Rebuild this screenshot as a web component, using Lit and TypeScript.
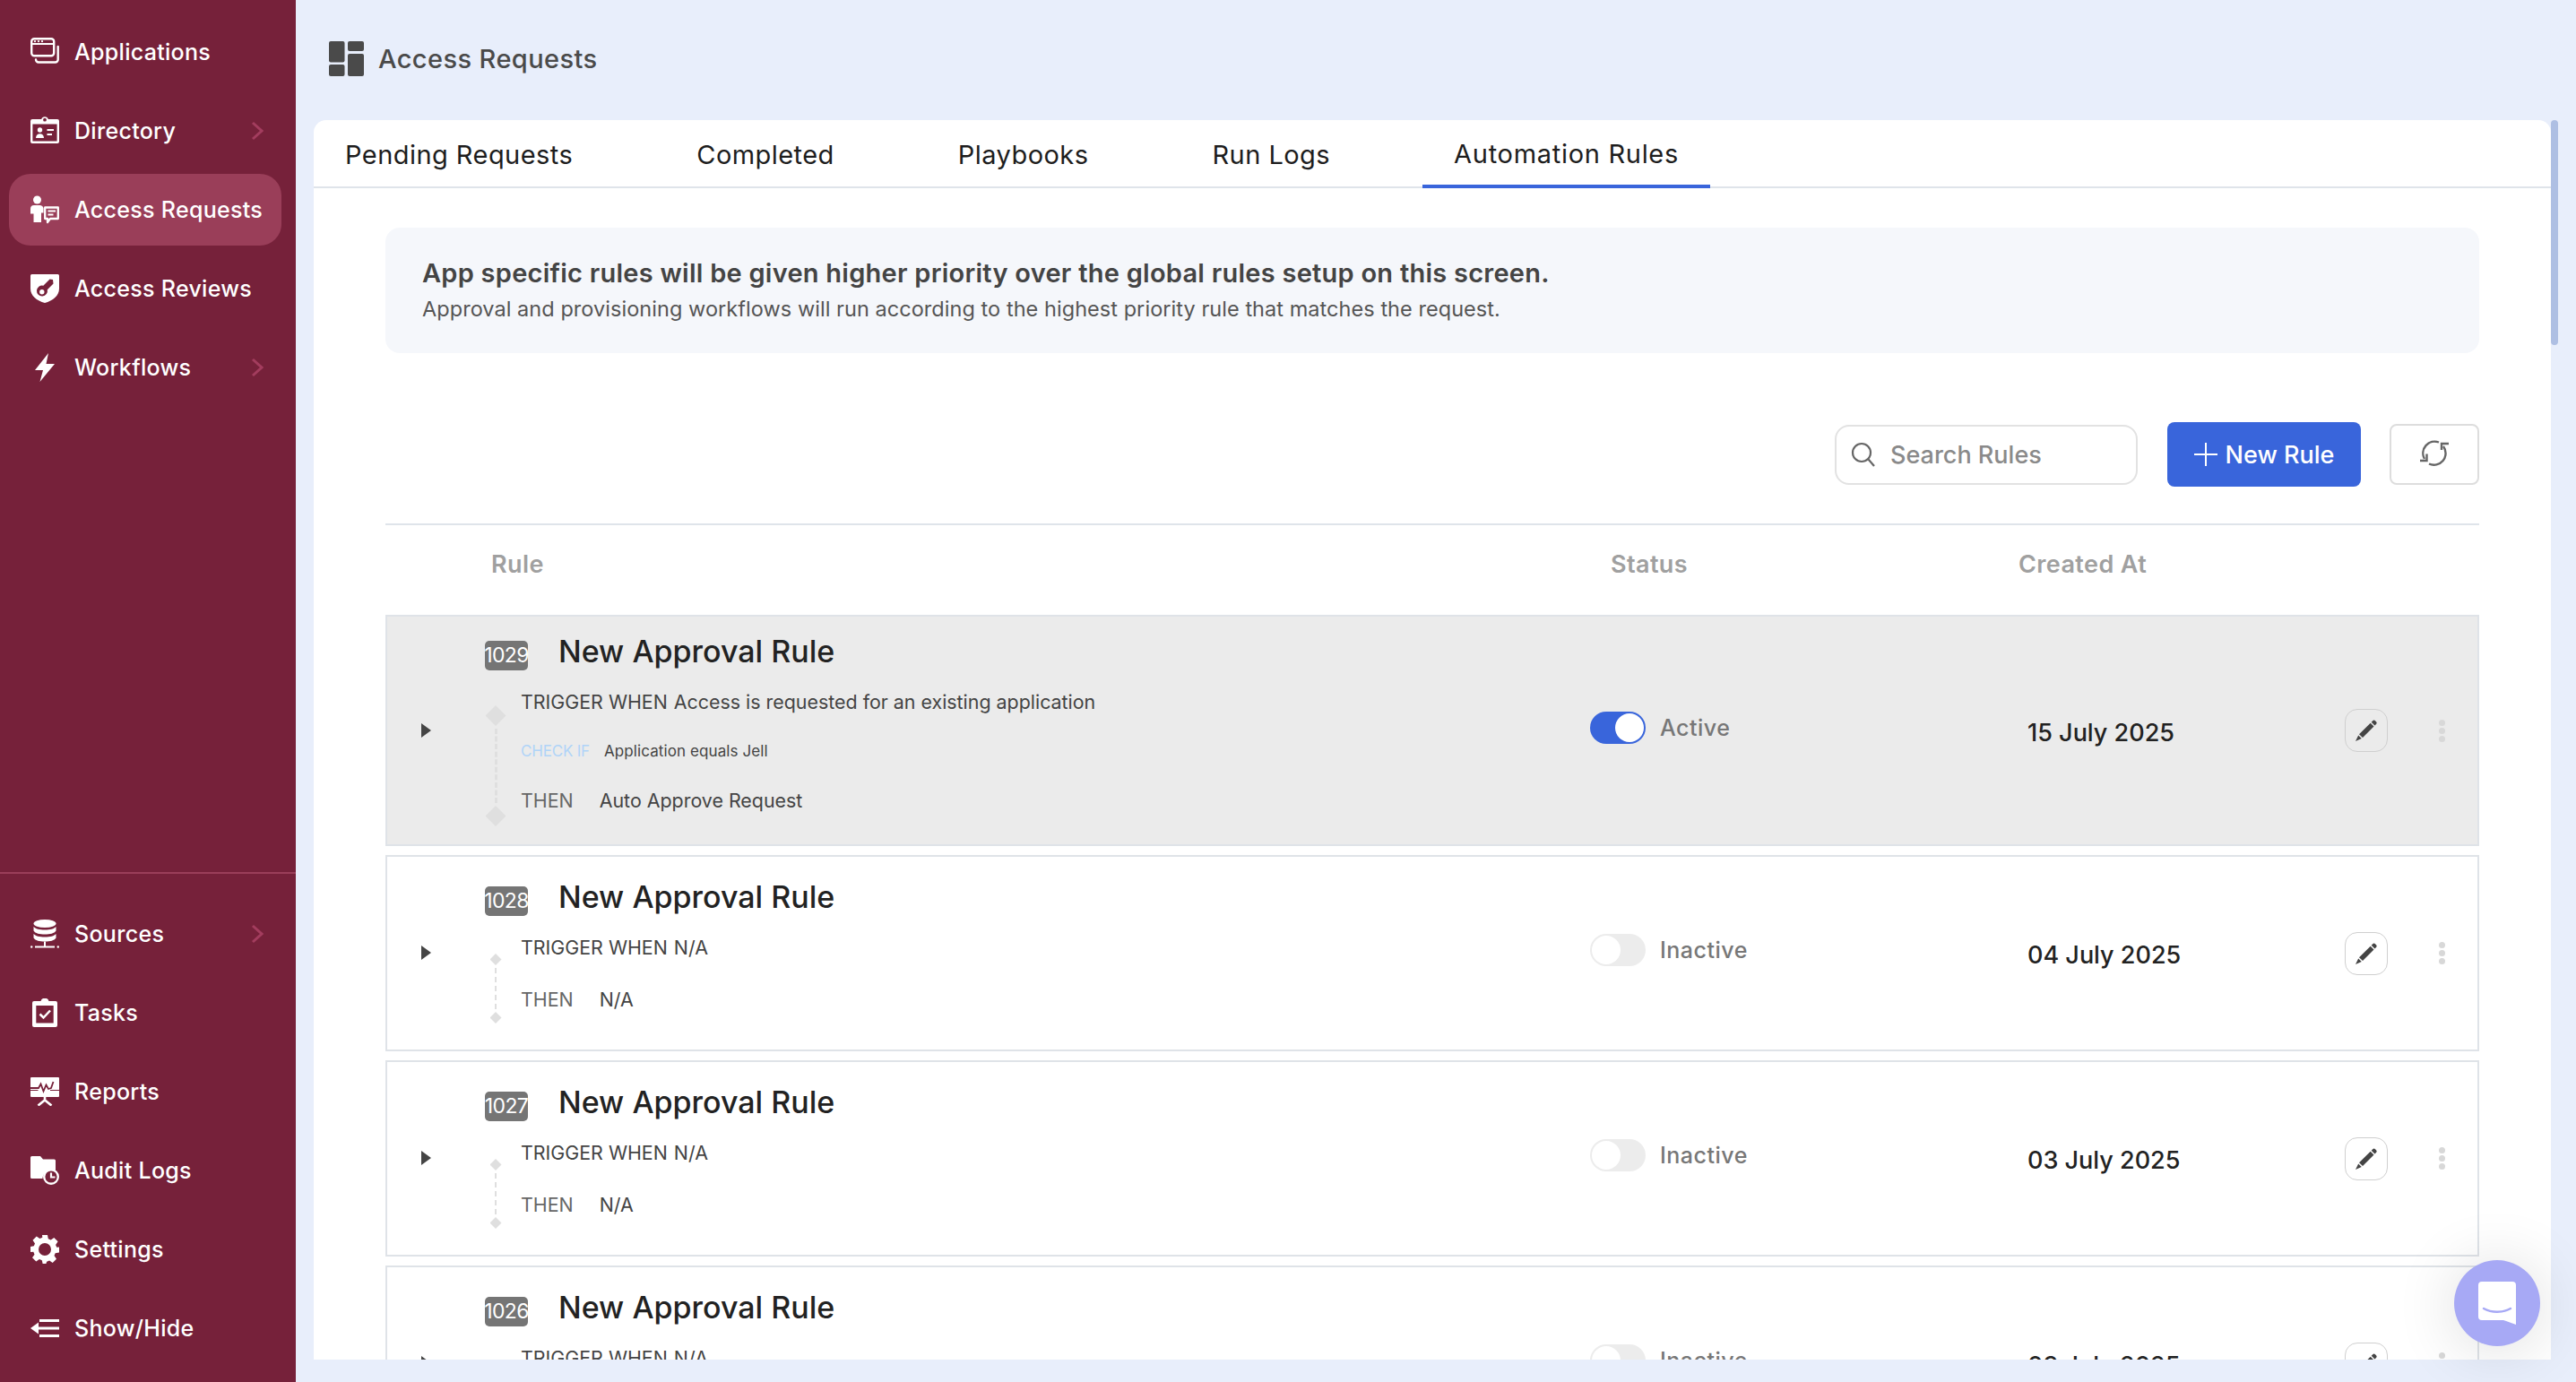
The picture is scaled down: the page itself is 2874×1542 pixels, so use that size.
import { LitElement, css, html, svg } from "lit";
import { customElement } from "lit/decorators.js";
import { classMap } from "lit/directives/class-map.js";

type NavItem = { label: string; icon: string; chevron?: boolean; active?: boolean };
type Line = { label: string; value: string; small?: boolean };
type Rule = { id: number; active: boolean; date: string; big?: boolean; lines: Line[] };

const topNav: NavItem[] = [
  { label: "Applications", icon: "apps" },
  { label: "Directory", icon: "directory", chevron: true },
  { label: "Access Requests", icon: "requests", active: true },
  { label: "Access Reviews", icon: "reviews" },
  { label: "Workflows", icon: "bolt", chevron: true },
];

const bottomNav: NavItem[] = [
  { label: "Sources", icon: "sources", chevron: true },
  { label: "Tasks", icon: "tasks" },
  { label: "Reports", icon: "reports" },
  { label: "Audit Logs", icon: "audit" },
  { label: "Settings", icon: "gear" },
  { label: "Show/Hide", icon: "hide" },
];

const tabs = ["Pending Requests", "Completed", "Playbooks", "Run Logs", "Automation Rules"];

const naLines: Line[] = [
  { label: "TRIGGER WHEN", value: "N/A" },
  { label: "THEN", value: "N/A" },
];

const rules: Rule[] = [
  {
    id: 1029,
    active: true,
    big: true,
    date: "15 July 2025",
    lines: [
      { label: "TRIGGER WHEN", value: "Access is requested for an existing application" },
      { label: "CHECK IF", value: "Application equals Jell", small: true },
      { label: "THEN", value: "Auto Approve Request" },
    ],
  },
  { id: 1028, active: false, date: "04 July 2025", lines: naLines },
  { id: 1027, active: false, date: "03 July 2025", lines: naLines },
  { id: 1026, active: false, date: "03 July 2025", lines: naLines },
];

const icons: Record<string, unknown> = {
  apps: svg`<rect x="1.2" y="1.2" width="25" height="19" rx="3" fill="none" stroke="currentColor" stroke-width="2.4"/>
    <path d="M1.5 7h24.5" stroke="currentColor" stroke-width="2"/>
    <circle cx="5" cy="4.2" r="1.1" fill="currentColor"/><circle cx="9" cy="4.2" r="1.1" fill="currentColor"/><circle cx="13" cy="4.2" r="1.1" fill="currentColor"/>
    <path d="M30.7 10v14.5a3 3 0 0 1-3 3H9a3 3 0 0 1-3-3" fill="none" stroke="currentColor" stroke-width="2.4" stroke-linecap="round"/>`,
  directory: svg`<path fill-rule="evenodd" fill="currentColor" d="M2 3h10.2a4 4 0 0 1 7.6 0H30a2 2 0 0 1 2 2v23a2 2 0 0 1-2 2H2a2 2 0 0 1-2-2V5a2 2 0 0 1 2-2zm14-1.200a1.900 1.900 0 1 0 0 3.800 1.900 1.900 0 0 0 0-3.800zM2.400 8.500V27.600h27.200V8.500z"/>
    <circle cx="10.500" cy="15" r="2.700" fill="currentColor"/><path d="M6 24c0-3.200 2-4.800 4.500-4.800S15 20.800 15 24z" fill="currentColor"/>
    <path d="M18.500 15H26M18.500 20H24" stroke="currentColor" stroke-width="2.200"/>`,
  requests: svg`<circle cx="7.500" cy="5" r="4.500" fill="currentColor"/>
    <path d="M4 11h7a4 4 0 0 1 3.500 3v5.500H12V30H3.500V20.500H0V15a4 4 0 0 1 4-4z" fill="currentColor"/>
    <path d="M16.200 13.500H30.800V26H22l-3 4v-4h-2.800z" fill="none" stroke="currentColor" stroke-width="2.300" stroke-linejoin="round"/>
    <path d="M19.500 17.500H28M19.500 21.500H25.500" stroke="currentColor" stroke-width="2"/>`,
  reviews: svg`<path fill-rule="evenodd" fill="currentColor" d="M1.500 0H30.500a1.500 1.500 0 0 1 1.500 1.500V16c0 8-7 13.500-16 16C7 29.500 0 24 0 16V1.500A1.500 1.500 0 0 1 1.500 0zM25 6l-3.500-.5-7.200 7.200a6 6 0 1 0 4.500 4.500l6.700-6.700zM12.800 17a2.700 2.700 0 1 1 0 5.400 2.700 2.700 0 0 1 0-5.400z"/>`,
  bolt: svg`<path fill="currentColor" d="M20 0 5 19h9l-3.500 13L27 12h-9.500z"/>`,
  sources: svg`<ellipse cx="16" cy="4.500" rx="12.500" ry="4.500" fill="currentColor"/>
    <path d="M3.500 8c2 2.400 6.500 3.500 12.500 3.500S26.500 10.400 28.500 8v4.500c-2 3-6.500 4-12.500 4s-10.500-1-12.500-4zM3.500 16c2 2.400 6.500 3.500 12.500 3.500s10.500-1.100 12.500-3.500v4.500c-2 3-6.500 4-12.500 4s-10.500-1-12.500-4z" fill="currentColor"/>
    <path d="M16 24.500V30M5 30.500H27" stroke="currentColor" stroke-width="2"/>
    <circle cx="1.200" cy="30.500" r="1.200" fill="currentColor"/><circle cx="30.800" cy="30.500" r="1.200" fill="currentColor"/>`,
  tasks: svg`<path fill="currentColor" fill-rule="evenodd" d="M4 3h7.500a4.700 4.700 0 0 1 9 0H28a2 2 0 0 1 2 2v25a2 2 0 0 1-2 2H4a2 2 0 0 1-2-2V5a2 2 0 0 1 2-2zm2.300 5v19.500h19.400V8z"/>
    <path d="M10.500 17.500l4 4 7.500-8" fill="none" stroke="currentColor" stroke-width="2.500"/>`,
  reports: svg`<path fill="currentColor" d="M1 0h30a1 1 0 0 1 1 1v20a1 1 0 0 1-1 1H1a1 1 0 0 1-1-1V1a1 1 0 0 1 1-1z"/>
    <path d="M0 12H9l2.500-4.500 3 8 3-7 2.500 4.500 3-1 2.500-7" fill="none" stroke="#76213a" stroke-width="1.800"/>
    <path d="M0 14.500h8.500M22 14.500h10" stroke="#76213a" stroke-width="1.200"/>
    <path d="M16 22v3M8.500 31.500 16 25.500l7.500 6" fill="none" stroke="currentColor" stroke-width="2.600"/>`,
  audit: svg`<path fill="currentColor" d="M1.500 0H11l3 3.500h12.500A1.500 1.500 0 0 1 28 5v11a10.500 10.500 0 0 0-14.500 9H1.500A1.500 1.500 0 0 1 0 23.500v-22A1.500 1.500 0 0 1 1.500 0z"/>
    <circle cx="23" cy="23" r="7.800" fill="none" stroke="currentColor" stroke-width="2.400"/>
    <path d="M23 18.500V23.500H27.500" fill="none" stroke="currentColor" stroke-width="2.200"/>`,
  gear: svg`<path fill="currentColor" fill-rule="evenodd" d="M13 0h6l.8 4.300 2.900 1.200 3.600-2.500 4.300 4.300-2.500 3.600 1.200 2.900L32 13.600v5.800l-4.300.8-1.200 2.900 2.500 3.600-4.300 4.300-3.600-2.500-2.900 1.200L17.400 32h-3.800l-.8-3.700-2.900-1.200-3.600 2.500-4.300-4.300 2.500-3.600-1.200-2.900L0 18.900v-5.800l3.800-.8L5 9.400 2.500 5.800 6.800 1.500l3.600 2.500 2.900-1.200zM16 9a7 7 0 1 0 0 14 7 7 0 0 0 0-14z"/>`,
  hide: svg`<path fill="currentColor" d="M0 16 9 9.500v13z"/>
    <path d="M10 7.500H32M8 16H32M10 24.500H32" stroke="currentColor" stroke-width="3"/>`,
};

const pencil = svg`<path fill="currentColor" d="M19.200 1.300a2 2 0 0 1 2.800 0l1 .9a2 2 0 0 1 0 2.800l-1.500 1.500-3.800-3.700zM16.700 3.800l3.800 3.700L8 20 4 16.300zM3.200 17.400 6.800 21 0 24z"/>`;

@customElement("app-root")
export class AppRoot extends LitElement {
  static styles = css`
    :host {
      display: flex;
      width: 100vw;
      height: 100vh;
      overflow: hidden;
      position: relative;
      background: #e8eefb;
      font-family: Inter, "Noto Sans", sans-serif;
      color: #222;
    }
    .sidebar {
      width: 330px;
      flex: none;
      background: #76213a;
      color: #fff;
      display: flex;
      flex-direction: column;
      justify-content: space-between;
    }
    .nav-top {
      padding: 18px 0 0;
    }
    .nav-bottom {
      border-top: 2px solid #9a3e59;
      padding: 27px 0 20px;
    }
    .nav-item {
      height: 80px;
      margin: 0 16px 8px 10px;
      padding: 0 20px 0 24px;
      border-radius: 24px;
      display: flex;
      align-items: center;
      font-size: 25px;
      font-weight: 500;
      letter-spacing: 0.3px;
    }
    .nav-bottom .nav-item:last-child {
      margin-bottom: 0;
    }
    .nav-item.active {
      background: #9a3e59;
    }
    .nav-item .icon {
      width: 32px;
      height: 32px;
      flex: none;
      margin-right: 17px;
    }
    .nav-item .chev {
      width: 14px;
      height: 22px;
      margin-left: auto;
      color: #a33d5e;
    }
    .main {
      flex: 1;
      min-width: 0;
      display: flex;
      flex-direction: column;
      padding: 0 28px 25px 20px;
    }
    .page-head {
      height: 134px;
      box-sizing: border-box;
      flex: none;
      display: flex;
      align-items: center;
      padding: 0 0 4px 17px;
      gap: 16px;
      color: #4a4a4a;
      font-size: 29px;
      font-weight: 500;
      letter-spacing: 0.4px;
    }
    .page-head svg {
      width: 39px;
      height: 39px;
    }
    .panel-wrap {
      flex: 1;
      min-height: 0;
      position: relative;
    }
    .panel {
      height: 100%;
      background: #fff;
      border-radius: 14px 14px 0 0;
      overflow: hidden;
    }
    .scrollbar {
      position: absolute;
      top: 0;
      right: -8px;
      width: 8px;
      height: 251px;
      border-radius: 4px;
      background: #aebfe3;
    }
    .tabs {
      display: flex;
      gap: 68px;
      height: 74px;
      border-bottom: 2px solid #dfe4ea;
    }
    .tab {
      padding: 0 35px;
      height: 76px;
      box-sizing: border-box;
      display: flex;
      align-items: center;
      font-size: 29px;
      font-weight: 400;
      letter-spacing: 0.45px;
      color: #1d1d1d;
    }
    .tab.active {
      border-bottom: 4px solid #3965db;
      padding-top: 2px;
      letter-spacing: 0.7px;
    }
    .content {
      padding: 44px 80px 0;
    }
    .info {
      height: 140px;
      box-sizing: border-box;
      background: #f5f7fb;
      border-radius: 16px;
      padding: 32px 41px 0;
    }
    .info-title {
      font-size: 29px;
      font-weight: 600;
      line-height: 38px;
      letter-spacing: 0.25px;
      color: #444;
    }
    .info-sub {
      font-size: 23.5px;
      line-height: 32px;
      margin-top: 5px;
      letter-spacing: 0.05px;
      color: #555;
    }
    .toolbar {
      display: flex;
      align-items: center;
      justify-content: flex-end;
      margin-top: 77px;
      height: 72px;
    }
    .search {
      width: 338px;
      height: 67px;
      box-sizing: border-box;
      border: 2px solid #e2e2e2;
      border-radius: 16px;
      display: flex;
      align-items: center;
      padding: 0 0 0 16px;
      gap: 16px;
    }
    .search svg {
      width: 28px;
      height: 28px;
      flex: none;
      color: #666;
    }
    .search input {
      width: 250px;
      border: 0;
      outline: 0;
      background: transparent;
      padding: 0;
      font: 500 27px Inter, sans-serif;
    }
    .search input::placeholder {
      color: #8a8a8a;
    }
    .new-rule {
      margin-left: 33px;
      width: 216px;
      height: 72px;
      border: 0;
      border-radius: 8px;
      background: #3965db;
      color: #fff;
      font: 500 27px Inter, sans-serif;
      display: flex;
      align-items: center;
      justify-content: center;
      gap: 9px;
      padding: 0;
    }
    .new-rule svg {
      width: 26px;
      height: 26px;
    }
    .refresh {
      margin-left: 32px;
      width: 100px;
      height: 68px;
      box-sizing: border-box;
      border: 2px solid #ddd;
      border-radius: 8px;
      background: #fff;
      display: flex;
      align-items: center;
      justify-content: center;
      color: #666;
      padding: 0;
    }
    .refresh svg {
      width: 34px;
      height: 34px;
    }
    .table-head {
      margin-top: 41px;
      border-top: 2px solid #dfe4ea;
      height: 102px;
      padding-bottom: 14px;
      box-sizing: border-box;
      display: grid;
      grid-template-columns: 118px 1249px 455px 1fr;
      align-items: center;
      font-size: 27px;
      font-weight: 600;
      letter-spacing: 0.4px;
      color: #a0a0a0;
    }
    .rows {
      display: flex;
      flex-direction: column;
      gap: 10px;
    }
    .row {
      border: 2px solid #dfe3e8;
      display: grid;
      grid-template-columns: 109px 1233px 488px 354px 84px 48px 16px;
      align-items: center;
      box-sizing: border-box;
    }
    .row.selected {
      background: #ebebeb;
    }
    .caret {
      margin-left: 38px;
      width: 0;
      height: 0;
      border-style: solid;
      border-width: 8px 0 8px 11px;
      border-color: transparent transparent transparent #444;
      margin-bottom: 1px;
    }
    .rule {
      align-self: start;
      padding: 33px 0 39px;
    }
    .selected .rule {
      padding: 27px 0 32px;
    }
    .rule-head {
      display: flex;
      align-items: center;
      gap: 34px;
      height: 33px;
    }
    .badge {
      width: 48px;
      height: 33px;
      border-radius: 5px;
      background: #757575;
      color: #fff;
      font-size: 23px;
      line-height: 33px;
      display: flex;
      justify-content: center;
      white-space: nowrap;
      letter-spacing: -0.6px;
    }
    .rule-title {
      font-size: 34px;
      font-weight: 500;
      color: #222;
      margin-bottom: 11px;
      white-space: nowrap;
    }
    .flow {
      display: flex;
      gap: 16px;
      margin-top: 18px;
    }
    .track {
      width: 24px;
      flex: none;
      display: flex;
      flex-direction: column;
      align-items: center;
      margin: 24px 0 -10px;
      gap: 3px;
    }
    .selected .track {
      margin: 21px 0 -12px;
    }
    .diamond {
      width: 13px;
      height: 13px;
      flex: none;
      background: #dfdfdf;
      clip-path: polygon(50% 0, 100% 50%, 50% 100%, 0 50%);
    }
    .selected .diamond {
      width: 23px;
      height: 23px;
    }
    .dash {
      flex: 1;
      width: 0;
      border-left: 2px dashed #dfdfdf;
    }
    .selected .dash {
      border-left-width: 3px;
    }
    .lines {
      display: flex;
      flex-direction: column;
      gap: 24px;
    }
    .selected .lines {
      gap: 21px;
    }
    .line {
      height: 34px;
      display: flex;
      align-items: center;
      font-size: 21.4px;
      color: #444;
      white-space: nowrap;
    }
    .line .key {
      color: #666;
      margin-right: 29px;
    }
    .line.trigger .key {
      color: #444;
      margin-right: 7px;
    }
    .line.small {
      font-size: 17px;
      letter-spacing: 0.1px;
    }
    .line.small .key {
      color: #b0d4f8;
      letter-spacing: -0.2px;
      margin-right: 16px;
    }
    .status {
      display: flex;
      align-items: center;
      gap: 16px;
      font-size: 25px;
      font-weight: 500;
      letter-spacing: 0.5px;
      color: #777;
      margin-bottom: 7px;
    }
    .toggle {
      width: 62px;
      height: 36px;
      box-sizing: border-box;
      border-radius: 18px;
      background: #ececec;
      padding: 2px;
      display: flex;
    }
    .toggle span {
      width: 32px;
      height: 32px;
      border-radius: 50%;
      background: #fff;
    }
    .toggle.on {
      background: #3965db;
      justify-content: flex-end;
    }
    .date {
      font-size: 27px;
      font-weight: 500;
      color: #222;
      margin-top: 4px;
      white-space: nowrap;
    }
    .edit {
      width: 48px;
      height: 48px;
      box-sizing: border-box;
      border: 1.5px solid #cfcfcf;
      border-radius: 14px;
      display: flex;
      align-items: center;
      justify-content: center;
      color: #444;
    }
    .edit svg {
      width: 24px;
      height: 24px;
    }
    .dots {
      display: flex;
      flex-direction: column;
      align-items: center;
      gap: 2px;
    }
    .dots i {
      width: 7px;
      height: 7px;
      border-radius: 50%;
      background: #d8d8d8;
    }
    .chat {
      position: absolute;
      right: 40px;
      bottom: 40px;
      width: 96px;
      height: 96px;
      border-radius: 50%;
      background: #a7a9f5;
      box-shadow: 0 4px 70px rgba(0, 0, 0, 0.14);
      display: flex;
      align-items: center;
      justify-content: center;
    }
    .chat svg {
      width: 42px;
      height: 48px;
    }
  `;

  private navItem(item: NavItem) {
    return html`<div class=${classMap({ "nav-item": true, active: !!item.active })}>
      <svg class="icon" viewBox="0 0 32 32">${icons[item.icon]}</svg>
      <span>${item.label}</span>
      ${item.chevron
        ? html`<svg class="chev" viewBox="0 0 14 22"><path d="M2 2l10 9-10 9" fill="none" stroke="currentColor" stroke-width="3"/></svg>`
        : null}
    </div>`;
  }

  private ruleRow(rule: Rule) {
    return html`<div class=${classMap({ row: true, selected: !!rule.big })}>
      <div class="caret"></div>
      <div class="rule">
        <div class="rule-head">
          <div class="badge">${rule.id}</div>
          <div class="rule-title">New Approval Rule</div>
        </div>
        <div class="flow">
          <div class="track"><div class="diamond"></div><div class="dash"></div><div class="diamond"></div></div>
          <div class="lines">
            ${rule.lines.map(
              (l, i) => html`<div class=${classMap({ line: true, trigger: i === 0, small: !!l.small })}>
                <span class="key">${l.label}</span><span>${l.value}</span>
              </div>`
            )}
          </div>
        </div>
      </div>
      <div class="status">
        <div class=${classMap({ toggle: true, on: rule.active })}><span></span></div>
        ${rule.active ? "Active" : "Inactive"}
      </div>
      <div class="date">${rule.date}</div>
      <div class="edit"><svg viewBox="0 0 24 24">${pencil}</svg></div>
      <div class="dots"><i></i><i></i><i></i></div>
      <div></div>
    </div>`;
  }

  render() {
    return html`
      <aside class="sidebar">
        <nav class="nav-top">${topNav.map((n) => this.navItem(n))}</nav>
        <nav class="nav-bottom">${bottomNav.map((n) => this.navItem(n))}</nav>
      </aside>
      <main class="main">
        <header class="page-head">
          <svg viewBox="0 0 39 39" fill="currentColor">
            <rect width="17.500" height="23.500" rx="2"/>
            <rect y="26" width="17.500" height="13" rx="2"/>
            <rect x="21" width="18" height="11" rx="2"/>
            <rect x="21" y="14" width="18" height="25" rx="2"/>
          </svg>
          Access Requests
        </header>
        <div class="panel-wrap">
          <div class="panel">
            <div class="tabs">
              ${tabs.map(
                (t) => html`<div class=${classMap({ tab: true, active: t === "Automation Rules" })}>${t}</div>`
              )}
            </div>
            <div class="content">
              <div class="info">
                <div class="info-title">App specific rules will be given higher priority over the global rules setup on this screen.</div>
                <div class="info-sub">Approval and provisioning workflows will run according to the highest priority rule that matches the request.</div>
              </div>
              <div class="toolbar">
                <label class="search">
                  <svg viewBox="0 0 28 28" fill="none" stroke="currentColor" stroke-width="2.200">
                    <circle cx="12" cy="12" r="10"/><path d="M19.500 19.500 26 27"/>
                  </svg>
                  <input placeholder="Search Rules" />
                </label>
                <button class="new-rule">
                  <svg viewBox="0 0 26 26" fill="none" stroke="currentColor" stroke-width="2"><path d="M13 0v26M0 13h26"/></svg>
                  New Rule
                </button>
                <button class="refresh">
                  <svg viewBox="0 0 34 34" fill="none" stroke="currentColor" stroke-width="2.400">
                    <path d="M22 3.500A13 13 0 0 0 6 22"/>
                    <path d="M8.500 16.500V24H1"/>
                    <path d="M11 27.500A13 13 0 0 0 27 8"/>
                    <path d="M33 5H25V12"/>
                  </svg>
                </button>
              </div>
              <div class="table-head">
                <div></div>
                <div>Rule</div>
                <div>Status</div>
                <div>Created At</div>
              </div>
              <div class="rows">${rules.map((r) => this.ruleRow(r))}</div>
            </div>
          </div>
          <div class="scrollbar"></div>
        </div>
      </main>
      <div class="chat">
        <svg viewBox="0 0 42 48">
          <path fill="#fff" d="M4 0h34a4 4 0 0 1 4 4v44l-14-5H4a4 4 0 0 1-4-4V4a4 4 0 0 1 4-4z"/>
          <path d="M6 30c9 5 21 5 30 0" fill="none" stroke="#a7a9f5" stroke-width="2.500" stroke-linecap="round"/>
        </svg>
      </div>
    `;
  }
}
